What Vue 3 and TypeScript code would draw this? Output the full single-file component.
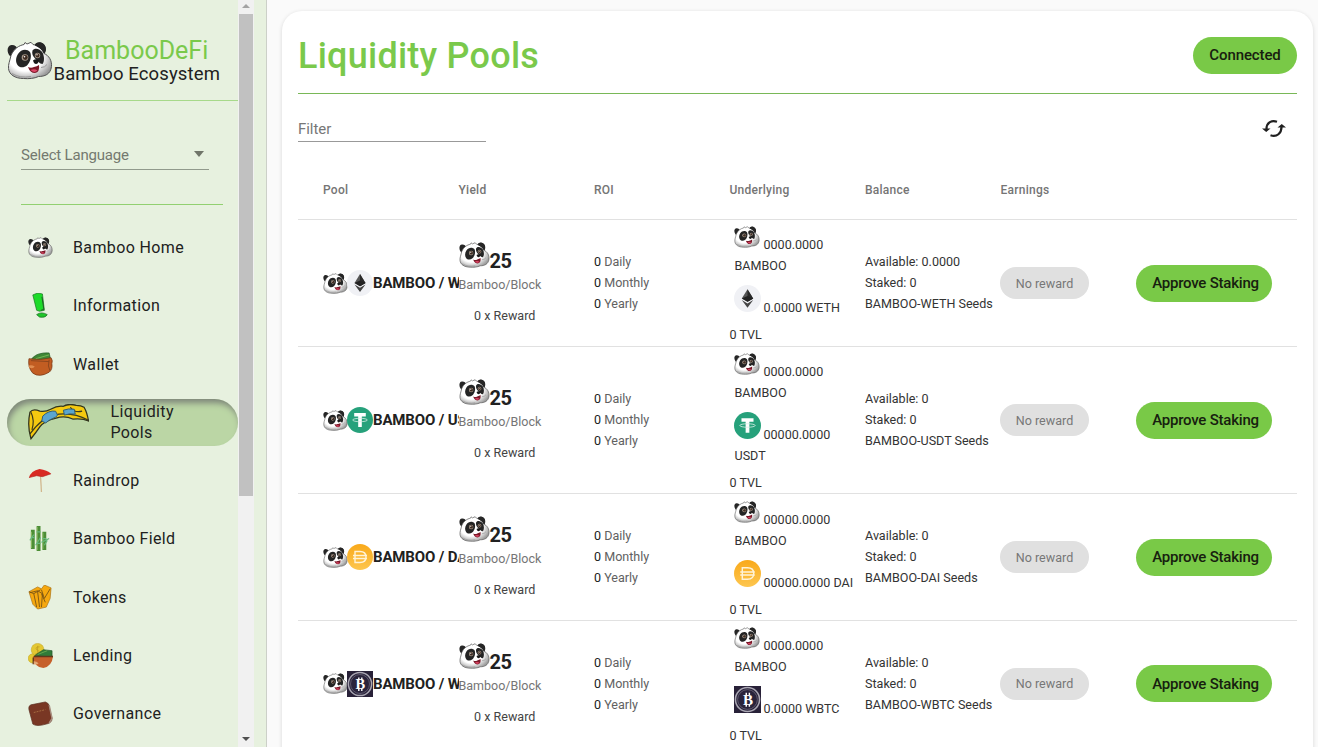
<script setup lang="ts">
interface Pool {
  coin: string
  name: string
  available: string
  bamboo: string
  amount: string
  unit: string
  wrap: boolean
}

const nav = [
  { icon: 'panda', label: 'Bamboo Home' },
  { icon: 'info', label: 'Information' },
  { icon: 'wallet', label: 'Wallet' },
  { icon: 'floatie', label: 'Liquidity Pools', active: true },
  { icon: 'umbrella', label: 'Raindrop' },
  { icon: 'bamboo', label: 'Bamboo Field' },
  { icon: 'tokens', label: 'Tokens' },
  { icon: 'lending', label: 'Lending' },
  { icon: 'book', label: 'Governance' },
]

const columns = ['Pool', 'Yield', 'ROI', 'Underlying', 'Balance', 'Earnings', '']

const pools: Pool[] = [
  { coin: 'eth', name: 'WETH', available: '0.0000', bamboo: '0000.0000', amount: '0.0000', unit: 'WETH', wrap: false },
  { coin: 'usdt', name: 'USDT', available: '0', bamboo: '0000.0000', amount: '00000.0000', unit: 'USDT', wrap: true },
  { coin: 'dai', name: 'DAI', available: '0', bamboo: '00000.0000', amount: '00000.0000', unit: 'DAI', wrap: false },
  { coin: 'wbtc', name: 'WBTC', available: '0', bamboo: '0000.0000', amount: '0.0000', unit: 'WBTC', wrap: false },
]
</script>

<template>
  <svg class="defs" aria-hidden="true">
    <defs>
      <linearGradient id="daiFill" x1="0" y1="0" x2="0" y2="1">
        <stop offset="0" stop-color="#f9a91a" />
        <stop offset="1" stop-color="#fdc64f" />
      </linearGradient>
      <radialGradient id="fur" cx=".4" cy=".4" r=".65">
        <stop offset=".6" stop-color="#fff" />
        <stop offset="1" stop-color="#9c9c9c" />
      </radialGradient>
    </defs>
    <symbol id="panda" viewBox="0 0 46 38">
      <path d="M2.500 14C-.5 10 0 4 4.500 3.500c3-.3 5.500 1.500 6.500 4.500l-6 8zM27 4.500c1-4 6-5 9-2.500 4 3 3.500 8 1 11z" fill="#262626" />
      <path d="M4 14C7 7 12 4 17 3l1-2 2 1.500L24 .8 26 3c5 1 9 4 11 9 5 2 8 7 7.500 13-1 8-7 10-13 10-4 2-10 2.500-15 2C8 37 2 33 1.500 27 1 23 3 19 4 14z" fill="url(#fur)" stroke="#555" stroke-width="1" />
      <path d="M28 4c1-3 5-4 8-2 4 3 3 8 1 10-2-4-5-6-9-8z" fill="#262626" />
      <path d="M11 12.500c3-5 9-5.500 12-2 2 4 .5 10-3 13.500-3 2.500-7.500 2.500-9.500-.5-2-3-2-7 .5-11zM25.500 9c2-3 7.500-2 10 2 2 4 2 9 0 11.500-3 0-5-3.500-7.500-5.500-2-2-3.500-5-2.500-8z" fill="#242424" />
      <circle cx="18" cy="16" r="3.300" fill="#a99a8c" /><circle cx="30.500" cy="14" r="2.700" fill="#a99a8c" />
      <circle cx="18.300" cy="16" r="2.400" fill="#3d2a20" /><circle cx="30.500" cy="14" r="1.900" fill="#3d2a20" />
      <circle cx="17.500" cy="15.200" r=".8" fill="#fff" /><circle cx="30" cy="13.300" r=".7" fill="#fff" />
      <path d="M26 19q3-2.500 6 0-1 3.500-3 3.500T26 19z" fill="#191919" />
      <path d="M21 25.500q3 1.500 6 0 3-.5 5-2 1 7-4 8-5 0-7-6z" fill="#7b1828" /><path d="M23.500 28.500q4-1.500 7 .5-3 3-7-.5z" fill="#df4768" />
      <path d="M5 32q8 5 19 3M34 26q4 0 6-3" fill="none" stroke="#999" stroke-width="1" />
    </symbol>
    <symbol id="info" viewBox="0 0 26 26">
      <path d="m5 2 5-2 5 1 2 17-5 1-3-1z" fill="#1ddb29" stroke="#176f21" stroke-width=".7" /><path d="m14.500 4 2 13-3 1" fill="none" stroke="#205d25" />
      <path d="M9 22.500q5-3.500 11 0-2 3.500-8 2.500z" fill="#1ec729" stroke="#176f21" stroke-width=".8" />
    </symbol>
    <symbol id="wallet" viewBox="0 0 26 26">
      <path d="M3 8Q9 0 22 1l2 9z" fill="#3f8735" stroke="#245a25" stroke-width=".7" /><path d="m8 7 14-4" stroke="#79b654" />
      <path d="M1 7q12 2 23-1 2 3 .8 6 1 6-2.800 9-10 6-17 1Q-.5 16 1 7z" fill="#c25d22" stroke="#7a3a18" stroke-width=".8" />
      <path d="M1 14q3-1 6 1-2 3-6 1" fill="#e08d50" /><path d="M22 8q-2 7 1 12M3 9l19 1" fill="none" stroke="#8b461d" />
    </symbol>
    <symbol id="floatie" viewBox="0 0 62 36">
      <path d="M2 8q3-4 10-1 6 1 11-2 7-4 13-3 5-3 13-1 5 0 8 2 3 5 4.500 14-6-3-16-2-8-4-17-1Q16 17 12 23 8 29 3 35-1 22 2 8z" fill="#f4c910" stroke="#32351f" stroke-width="1.300" />
      <path d="M2 30q13-17 24-19 18-4 35 5M3 8q4 8 1 18M43 3q4 6 12 4" fill="none" stroke="#3b3b1d" stroke-width="1.200" />
      <path d="M15 12q6-6 13-5l2 4q-2 3-4 3-5 2-8 5l-4-2zM36 6q5-2 11-1l1 5q-6-1-11 1z" fill="#5aa5cf" stroke="#315d72" />
    </symbol>
    <symbol id="umbrella" viewBox="0 0 26 26">
      <path d="m13 8 1 17" stroke="#d0b68c" stroke-width="1.300" /><path d="M1 10Q3 3 12 1q8 1 12 5l-9 3-6-1z" fill="#d82a23" /><path d="m1 10 8-2 6 1 9-3" fill="none" stroke="#b32722" stroke-width=".7" />
    </symbol>
    <symbol id="bamboo" viewBox="0 0 26 26">
      <g fill="none" stroke="#4c8e36" stroke-width="4"><path d="M5 4v20M11 0v26M17 6v19" /></g>
      <path d="M9.500 1v24M3.500 6v17M15.500 7v17" stroke="#91bc65" stroke-width="1" />
      <path d="m2 15 4-6M8 20l5-8M14 17l8-4M17 20l3-5M3 12h4M9 6h4M9 18h4M15 13h4" fill="none" stroke="#66b87c" stroke-width="1.300" />
    </symbol>
    <symbol id="tokens" viewBox="0 0 26 26">
      <path d="m1 7 9-5 4 2 3-4 7 3-1 11-4 9-9 2-5-5z" fill="#f6a80f" stroke="#a87012" stroke-width=".7" />
      <path d="m2 8 8-2 5 3-1 14M6 9l3 14M10 7l2 16M14 5l3 9 6-10M14 9l4 9M1 7l5 2 7-4" fill="none" stroke="#755115" stroke-width=".9" />
    </symbol>
    <symbol id="lending" viewBox="0 0 26 26">
      <circle cx="5" cy="16" r="4.800" fill="#e4c832" stroke="#c5a828" stroke-width=".6" /><circle cx="10" cy="7" r="6.600" fill="#e4c832" stroke="#c5a828" stroke-width=".6" />
      <path d="M12 4q-5 0-3 3 5 2 1 4H8M10 3v9" fill="none" stroke="#c09d20" stroke-width=".8" />
      <path d="m7 13 9-6 9 1v7z" fill="#317b39" stroke="#23572a" stroke-width=".7" /><path d="m10 12 10-4" stroke="#69a84f" /><path d="M5 14h21q-1 10-10 12-9 0-11-12z" fill="#c6602b" /><path d="M5.500 15v7M6 14h20" fill="none" stroke="#60381c" stroke-width="1.500" /><path d="M6 19q3 0 5 2-2 2-5 1" fill="#e3a673" />
    </symbol>
    <symbol id="book" viewBox="0 0 26 26">
      <path d="m3 4 15-3q4 1 4 5l3 12q0 5-6 6-10 3-14 0L1 9q-1-4 2-5z" fill="#793724" stroke="#5b3022" stroke-width=".7" /><path d="m22 4 3 14-3 5" fill="none" stroke="#a98e80" stroke-width="1.500" /><path d="m6 12 12-3" stroke="#a76d42" stroke-dasharray="2 1" />
    </symbol>
    <symbol id="eth" viewBox="0 0 26 26">
      <circle cx="13" cy="13" r="13" fill="#f0f1f5" /><path d="M13 4 7.500 13l5.500 3.200 5.500-3.200z" fill="#555" /><path d="m13 4 5.500 9-5.500 3.200z" fill="#292929" /><path d="M13 10.500 7.500 13l5.500 3.200 5.500-3.200z" fill="#222" /><path d="m7.500 14.500 5.500 7.500 5.500-7.500-5.500 3.200z" fill="#444" />
    </symbol>
    <symbol id="usdt" viewBox="0 0 26 26">
      <circle cx="13" cy="13" r="13" fill="#26a17b" /><path d="M7.200 6h11.600v3.500h-4V20h-3.600V9.500h-4z" fill="#fff" /><ellipse cx="13" cy="13" rx="7.400" ry="1.700" fill="none" stroke="#d7eee6" stroke-width=".8" />
    </symbol>
    <symbol id="dai" viewBox="0 0 26 26">
      <circle cx="13" cy="13" r="13" fill="url(#daiFill)" /><path d="M8 7.500h5q6 0 6 5.500t-6 5.500H8zM6 11.500h14M6 14.500h14" fill="none" stroke="#fff3d7" stroke-width="1.400" />
    </symbol>
    <symbol id="wbtc" viewBox="0 0 26 26">
      <path d="M0 0h26v26H0z" fill="#282138" /><circle cx="13" cy="13" r="11.600" fill="#29233b" stroke="#aaa7b3" stroke-width="1.500" /><circle cx="13" cy="13" r="9.500" fill="none" stroke="#686377" stroke-width=".8" />
      <text x="13.400" y="18" text-anchor="middle" font-family="Liberation Serif, serif" font-size="14.500" font-weight="700" fill="#fff">B</text><path d="M11.800 6.500v2.500M14.800 6.500v2.500M11.800 17.500V20M14.800 17.500V20" stroke="#fff" stroke-width="1.400" />
    </symbol>
  </svg>

  <div class="app">
    <aside class="sidebar">
      <div class="scroll">
        <header class="brand">
          <svg class="logo"><use href="#panda" /></svg>
          <div class="brand-text"><strong>BambooDeFi</strong><span>Bamboo Ecosystem</span></div>
        </header>
        <div class="language"><span>Select Language</span><i /></div>
        <div class="divider" />
        <nav>
          <a v-for="item in nav" :key="item.label" :class="{ active: item.active }">
            <svg><use :href="'#' + item.icon" /></svg><span>{{ item.label }}</span>
          </a>
        </nav>
      </div>
      <div class="scrollbar"><i class="up" /><div class="thumb" /><i class="down" /></div>
    </aside>

    <main>
      <section class="card">
        <header class="top"><h1>Liquidity Pools</h1><button class="btn connected">Connected</button></header>
        <div class="toolbar">
          <div class="filter">Filter</div>
          <svg class="refresh" viewBox="0 0 24 20" fill="none" stroke="#202020" stroke-width="2.200">
            <path d="M4.500 10C4.500 4 9 .8 15 2.800M19.500 8c0 6-4.500 10.500-11 8.300" /><path d="m0 9.500 4.200 3.500 4.300-3.500zM15.500 8.500 19.800 5 24 8.500z" fill="#202020" stroke="none" />
          </svg>
        </div>
        <div class="table">
          <div class="row head"><div v-for="c in columns" :key="c">{{ c }}</div></div>
          <div v-for="p in pools" :key="p.name" class="row body" :class="{ tall: p.wrap }">
            <div class="pool"><svg class="mini"><use href="#panda" /></svg><svg class="coin"><use :href="'#' + p.coin" /></svg><b>BAMBOO / {{ p.name }}</b></div>
            <div class="yield">
              <div class="rate"><svg><use href="#panda" /></svg><b>25</b></div>
              <div class="per">Bamboo/Block</div>
              <div class="reward">0 x Reward</div>
            </div>
            <div class="roi"><p><b>0</b> Daily</p><p><b>0</b> Monthly</p><p><b>0</b> Yearly</p></div>
            <div class="under">
              <div class="asset first"><svg class="mini"><use href="#panda" /></svg><span>{{ p.bamboo }}</span></div>
              <div class="unit">BAMBOO</div>
              <div class="asset"><svg class="coin"><use :href="'#' + p.coin" /></svg><span>{{ p.wrap ? p.amount : `${p.amount} ${p.unit}` }}</span></div>
              <div v-if="p.wrap" class="unit">{{ p.unit }}</div>
              <div class="tvl">0 TVL</div>
            </div>
            <div class="balance"><p>Available: {{ p.available }}</p><p>Staked: 0</p><p>BAMBOO-{{ p.name }} Seeds</p></div>
            <div><span class="chip">No reward</span></div>
            <div><button class="btn stake">Approve Staking</button></div>
          </div>
        </div>
      </section>
    </main>
  </div>
</template>

<style>
body { margin: 0; overflow: hidden; background: #fafafa; }
</style>

<style scoped>
* { box-sizing: border-box; }
.defs { position: absolute; width: 0; height: 0; }
.app { display: flex; width: 1318px; height: 747px; overflow: hidden; font-family: Roboto, sans-serif; color: #212121; background: #fafafa; }
.sidebar { display: flex; width: 267px; flex: none; background: #e7f1df; border-right: 1px solid #ccd0c8; padding-left: 7px; }
.scroll { width: 231px; height: 747px; overflow: hidden; }
.brand { display: flex; height: 101px; border-bottom: 1px solid #a7d98a; padding-top: 38px; }
.logo { width: 46px; height: 39px; flex: none; margin-top: 3px; }
.brand-text { display: flex; flex-direction: column; white-space: nowrap; }
.brand-text strong { font-size: 25px; font-weight: 400; line-height: 25px; color: #7ac94b; padding-left: 12px; }
.brand-text span { font-size: 18.5px; line-height: 22px; letter-spacing: .13px; margin-left: .5px; }
.language { display: flex; justify-content: space-between; align-items: center; width: 188px; height: 29px; margin: 40px 0 0 14px; border-bottom: 1px solid #919a8c; color: #74796f; font-size: 15px; letter-spacing: -.2px; }
.language i { border: 5.5px solid transparent; border-top: 6px solid #707569; border-bottom: 0; margin: -2px 5px 0 0; }
.divider { width: 202px; height: 1px; margin: 34px 0 0 14px; background: #92d071; }
nav { padding-top: 19px; }
nav a { display: flex; align-items: center; height: 47px; margin-bottom: 11.3px; padding-left: 21px; font-size: 16px; line-height: 21px; letter-spacing: .37px; border-radius: 24px; }
nav a svg { width: 25px; height: 25px; margin-right: 20px; flex: none; }
nav a.active { background: #bbd6a5; box-shadow: inset 2px 5px 6px -1px #7d8579; }
nav a.active svg { width: 61px; height: 36px; margin-right: 21.5px; }
nav a.active span { width: 75px; }
.scrollbar { width: 16px; height: 747px; background: #f1f1f1; display: flex; flex-direction: column; align-items: center; }
.scrollbar i { border: 4px solid transparent; }
.up { margin-top: 4px; border-top: 0 !important; border-bottom-color: #a3a3a3 !important; }
.thumb { width: 14px; height: 482px; margin-top: 6px; background: #c1c1c1; }
.down { border-bottom: 0 !important; border-top-color: #505050 !important; margin-top: auto; margin-bottom: 6px; }
main { flex: 1; padding: 11px 5px 0 15px; }
.card { height: 760px; background: #fff; border-radius: 20px; padding: 0 16px; box-shadow: 0 1px 4px rgba(0,0,0,.14); }
.top { height: 83px; border-bottom: 1px solid #79b857; display: flex; align-items: center; justify-content: space-between; }
h1 { margin: 7px 0 0; font-size: 36px; line-height: 42px; font-weight: 500; color: #7ac94b; letter-spacing: .24px; }
.btn { display: block; height: 37px; width: 136px; border: 0; border-radius: 19px; padding: 0; background: #79c947; color: #17200f; font: 500 15px Roboto, sans-serif; letter-spacing: -.22px; white-space: nowrap; }
.stake { padding-left: 3px; }
.connected { width: 104px; margin-top: 6px; letter-spacing: -.12px; }
.toolbar { height: 66px; display: flex; justify-content: space-between; padding-top: 21px; }
.filter { width: 188px; height: 27px; line-height: 28px; color: #777; font-size: 15px; border-bottom: 1px solid #999; letter-spacing: -.05px; }
.refresh { width: 24px; height: 20px; margin: 4px 11.5px 0 0; }
.row { display: grid; grid-template-columns: repeat(7, 135.5px); padding: .3px 24px 0 25px; height: 126.7px; border-bottom: 1px solid #e1e1e1; align-items: center; font-size: 12.55px; }
.row > div { min-width: 0; }
.row.head { height: 60.2px; padding-top: 0; font-weight: 500; color: #757575; font-size: 12px; letter-spacing: .25px; }
.row.tall { height: 147.4px; }
p { margin: 0; line-height: 21px; white-space: nowrap; }
.pool { display: flex; align-items: center; overflow: hidden; white-space: nowrap; }
.mini { width: 26px; height: 24px; flex: none; }
.coin { width: 27px; height: 27px; flex: none; }
.pool .mini { width: 25px; height: 23px; margin-right: -1px; }
.pool .coin { width: 26px; height: 26px; }
.pool b { font-size: 15px; letter-spacing: -.15px; }
.rate { display: flex; height: 31px; align-items: flex-start; }
.rate svg { width: 31px; height: 28px; flex: none; }
.rate b { font-size: 20px; line-height: 24px; margin-top: 8px; font-weight: 700; letter-spacing: -.4px; }
.yield { padding-top: 1px; }
.per { line-height: 17px; font-size: 12.5px; color: #757575; margin-top: 4px; }
.reward { line-height: 20px; padding-left: 15.5px; margin-top: 13px; color: #444; }
.roi { color: #616161; }
.roi b { font-weight: 400; color: #212121; }
.balance, .roi { margin-top: -1px; }
.under { align-self: start; padding-top: 6px; color: #333; }
.asset { display: flex; align-items: flex-start; white-space: nowrap; height: 42px; padding-left: 4px; }
.asset span { line-height: 21px; margin: 21px 0 0 3px; }
.asset .coin { margin-top: 9px; }
.asset.first { height: 29px; }
.asset.first .mini { margin-top: -1px; }
.asset.first span { margin: 8px 0 0 4px; }
.unit { line-height: 21px; padding-left: 5px; }
.tvl { line-height: 21px; margin-top: 6px; }
.chip { display: flex; align-items: center; justify-content: center; width: 89px; height: 32px; border-radius: 16px; background: #e0e0e0; color: #777; margin-left: -.5px; }
.balance { color: #333; }
</style>
